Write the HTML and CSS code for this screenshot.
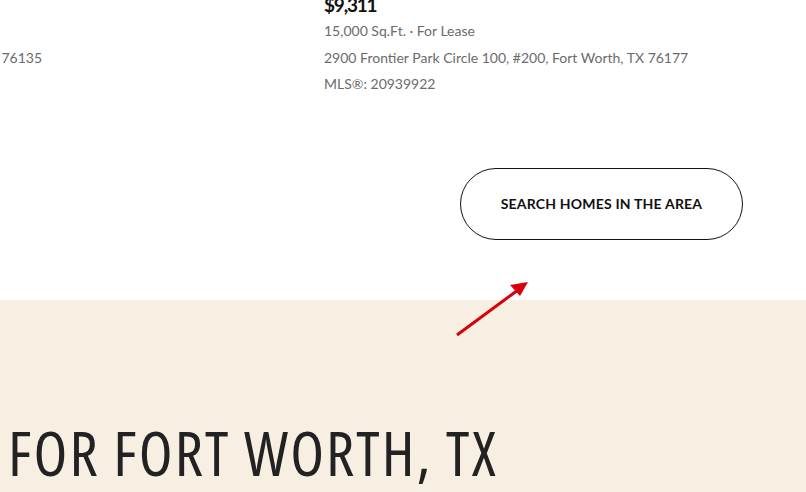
FILE: index.html
```html
<!DOCTYPE html>
<html>
<head>
<meta charset="utf-8">
<link rel="stylesheet" href="styles.css">
</head>
<body>
<div class="page">
  <section class="listings">
    <div class="listing listing-left">
      <div class="price">$4,200</div>
      <div class="meta">2,400 Sq.Ft. · For Lease</div>
      <div class="meta">6300 Ridglea Place, Fort Worth, TX 76135</div>
      <div class="meta">MLS®: 20911111</div>
    </div>
    <div class="listing listing-right">
      <div class="price">$9,311</div>
      <div class="meta">15,000 Sq.Ft. · For Lease</div>
      <div class="meta">2900 Frontier Park Circle 100, #200, Fort Worth, TX 76177</div>
      <div class="meta">MLS®: 20939922</div>
    </div>
  </section>
  <div class="cta-row">
    <a class="cta" href="#">SEARCH HOMES IN THE AREA</a>
  </div>
  <section class="beige">
    <h2 class="title">FOR FORT WORTH, TX</h2>
  </section>
  <svg class="arrow" width="90" height="70" viewBox="0 0 90 70">
    <line x1="7" y1="63" x2="72" y2="15" stroke="#d9000d" stroke-width="3" stroke-linecap="butt"/>
    <polygon points="78,10 60,13 70,24" fill="#d9000d"/>
  </svg>
</div>
</body>
</html>
```
FILE: styles.css
```css
html, body {
  margin: 0;
  padding: 0;
  background: #fff;
}
body {
  font-family: "Lato", "Noto Sans", sans-serif;
  overflow: hidden;
}
.page {
  position: relative;
  width: 806px;
  height: 492px;
  overflow: hidden;
}
.listings {
  display: flex;
  gap: 40px;
  margin-top: -8px;
  margin-left: -218px;
}
.listing {
  flex: 0 0 auto;
  display: flex;
  flex-direction: column;
}
.listing-left {
  width: 502px;
}
.listing-right {
  width: 460px;
}
.price {
  font-size: 19px;
  font-weight: 700;
  color: #111;
  line-height: 26px;
  letter-spacing: -1.2px;
}
.meta {
  font-size: 14px;
  color: #6b6b6b;
  line-height: 26.5px;
}
.cta-row {
  display: flex;
  justify-content: flex-end;
  padding-right: 63px;
  margin-top: 70px;
  height: 132px;
}
.cta {
  display: flex;
  align-items: center;
  justify-content: center;
  box-sizing: border-box;
  width: 283px;
  height: 72px;
  border: 1px solid #111;
  border-radius: 36px;
  color: #111;
  text-decoration: none;
  font-size: 14px;
  font-weight: 700;
  letter-spacing: 0.2px;
}
.beige {
  background: #f8efe3;
  height: 192px;
  padding-left: 8px;
  box-sizing: border-box;
  padding-top: 115px;
}
.title {
  margin: 0;
  font-family: "Open Sans", "DejaVu Sans Condensed", sans-serif;
  font-stretch: 75%;
  font-weight: 400;
  font-size: 62px;
  line-height: 74px;
  letter-spacing: 2.1px;
  color: #222;
  white-space: nowrap;
}
.arrow {
  position: absolute;
  left: 450px;
  top: 272px;
}
```
